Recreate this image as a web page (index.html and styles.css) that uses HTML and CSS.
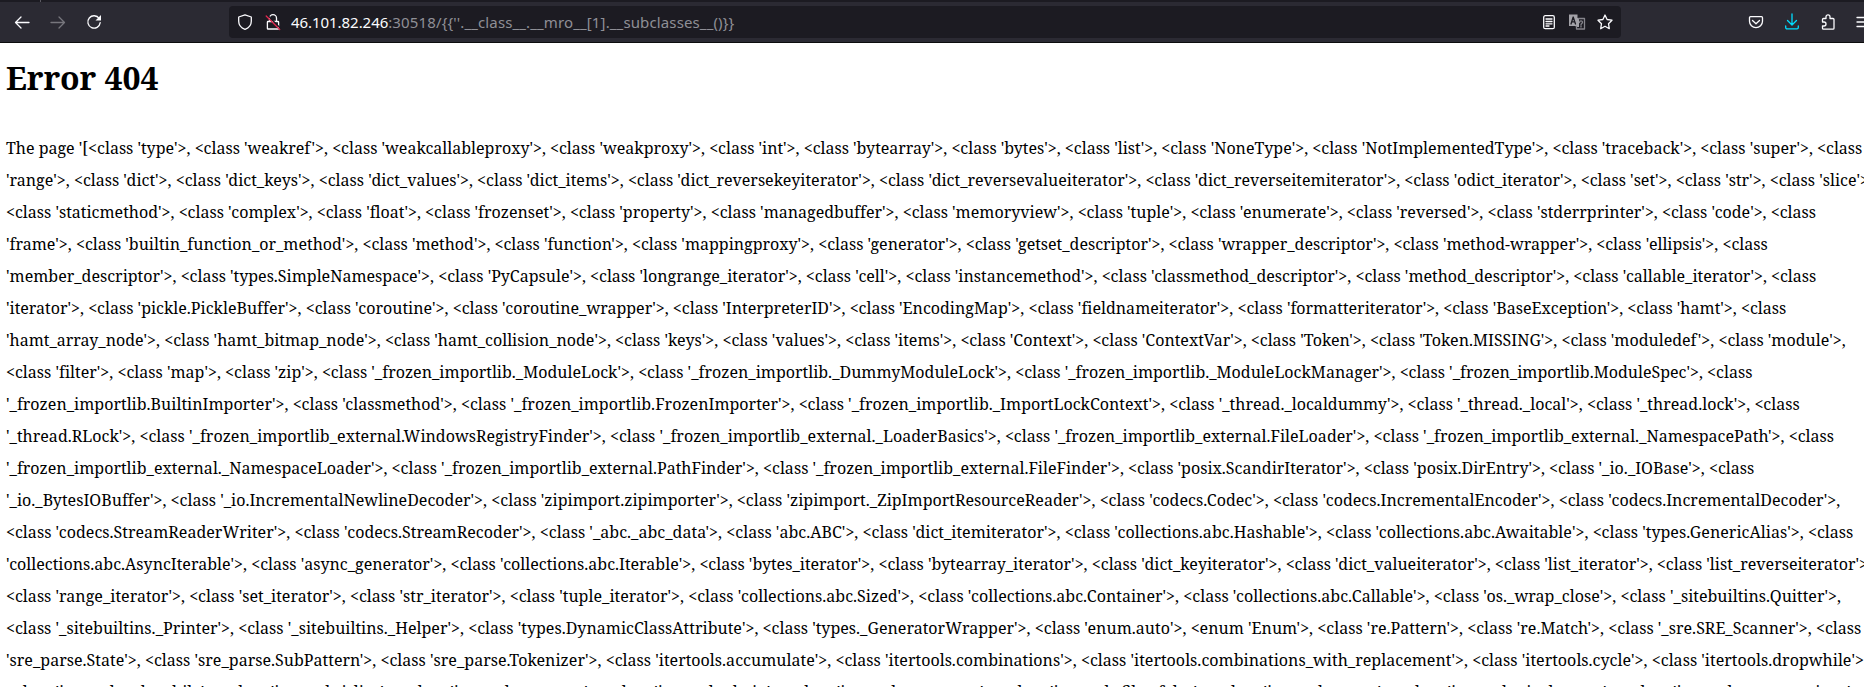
FILE: index.html
```html
<!DOCTYPE html>
<html lang="en">
<head>
<meta charset="utf-8">
<title>Error 404</title>
<link rel="stylesheet" href="styles.css">
</head>
<body>
<div class="tabstrip"><span class="tab-edge"></span></div>
<header class="toolbar">
  <nav class="nav">
    <svg class="icon" viewBox="0 0 16 16"><path d="M15 8.5H1.5M7 3 1.5 8.5 7 14"/></svg>
    <svg class="icon disabled" viewBox="0 0 16 16"><path d="M1 8.5h13.500M9 3l5.500 5.500L9 14"/></svg>
    <svg class="icon" viewBox="0 0 16 16"><path d="M13.200 4.500A6.200 6.200 0 1 0 14.200 8.700"/><path class="solid" d="M15 1v5.500H9.500z"/></svg>
  </nav>
  <div class="urlbar">
    <svg class="icon" viewBox="0 0 16 16"><path d="M8 .8 14.300 3v4.200c0 3.700-2.500 6.600-6.300 8.100-3.800-1.500-6.300-4.400-6.300-8.100V3z"/></svg>
    <svg class="icon lock" viewBox="0 0 16 16"><path d="M4.500 7.500V4.200a3.500 3.500 0 0 1 7 0v3.300M3 7.500h10a.6.6 0 0 1 .6.6v6.300a.6.6 0 0 1-.6.6H3a.6.6 0 0 1-.6-.6V8.100a.6.6 0 0 1 .6-.6z"/><path class="gap" d="M2.500 1.200 15.800 14.500"/><path class="slash" d="M1.200 2 14.700 15.500"/></svg>
    <span class="url"><b>46.101.82.246</b>:30518/{{''.__class__.__mro__[1].__subclasses__()}}</span>
    <svg class="icon" viewBox="0 0 16 16"><rect x="2.700" y="1.700" width="10.600" height="13" rx="1.500"/><path d="M5 5h6M5 7.500h6M5 9.800h6M5 12h3"/></svg>
    <svg class="icon translate" viewBox="0 0 16 16"><path class="solid" d="M0 .5h8.500v3.500H10v9H8l-2-1H0z"/><path class="letter" d="M2 10 4.200 3 6.500 10M2.800 7.800h3"/><path d="M9.500 4.500h6v10.500H7.500V12.500"/><path d="M10.500 8.500c0-2 3-2 3-.2 0 1.200-1.500 1.200-1.500 2.400M12 12v1"/></svg>
    <svg class="icon" viewBox="0 0 16 16"><path d="m8 1 2.100 4.500 4.900.7-3.500 3.500.8 5L8 12.300l-4.300 2.400.8-5L1 6.200l4.900-.7z"/></svg>
  </div>
  <div class="actions">
    <svg class="icon" viewBox="0 0 16 16"><path d="M2.500 2.700h11a1 1 0 0 1 1 1v3.500a6.500 6.500 0 0 1-13 0V3.700a1 1 0 0 1 1-1zM4.500 6.500 8 9.800l3.500-3.300"/></svg>
    <svg class="icon download" viewBox="0 0 16 16"><path d="M8 0v10.500M3.500 6.500 8 11l4.500-4.500M1.700 12v1.500a1.300 1.300 0 0 0 1.300 1.300h10a1.300 1.300 0 0 0 1.300-1.300V12"/></svg>
    <svg class="icon" viewBox="0 0 16 16"><path d="M2.500 8V5.500a1 1 0 0 1 1-1H6V2.800a2 2 0 0 1 4 0v1.700h3a1 1 0 0 1 1 1v8.700a1 1 0 0 1-1 1H3.500a1 1 0 0 1-1-1V12H4a2 2 0 0 0 0-4z"/></svg>
    <svg class="icon" viewBox="0 0 16 16"><path d="M1 3.500h14M1 8h14M1 12.500h14"/></svg>
  </div>
</header>
<main class="page">
<h1 class="title">Error 404</h1>
<div class="listing">
<p class="line" data-end="1862.3">The page '[&lt;class 'type'&gt;, &lt;class 'weakref'&gt;, &lt;class 'weakcallableproxy'&gt;, &lt;class 'weakproxy'&gt;, &lt;class 'int'&gt;, &lt;class 'bytearray'&gt;, &lt;class 'bytes'&gt;, &lt;class 'list'&gt;, &lt;class 'NoneType'&gt;, &lt;class 'NotImplementedType'&gt;, &lt;class 'traceback'&gt;, &lt;class 'super'&gt;, &lt;class</p>
<p class="line" data-end="1873">'range'&gt;, &lt;class 'dict'&gt;, &lt;class 'dict_keys'&gt;, &lt;class 'dict_values'&gt;, &lt;class 'dict_items'&gt;, &lt;class 'dict_reversekeyiterator'&gt;, &lt;class 'dict_reversevalueiterator'&gt;, &lt;class 'dict_reverseitemiterator'&gt;, &lt;class 'odict_iterator'&gt;, &lt;class 'set'&gt;, &lt;class 'str'&gt;, &lt;class 'slice'&gt;,</p>
<p class="line" data-end="1815.3">&lt;class 'staticmethod'&gt;, &lt;class 'complex'&gt;, &lt;class 'float'&gt;, &lt;class 'frozenset'&gt;, &lt;class 'property'&gt;, &lt;class 'managedbuffer'&gt;, &lt;class 'memoryview'&gt;, &lt;class 'tuple'&gt;, &lt;class 'enumerate'&gt;, &lt;class 'reversed'&gt;, &lt;class 'stderrprinter'&gt;, &lt;class 'code'&gt;, &lt;class</p>
<p class="line" data-end="1767.7">'frame'&gt;, &lt;class 'builtin_function_or_method'&gt;, &lt;class 'method'&gt;, &lt;class 'function'&gt;, &lt;class 'mappingproxy'&gt;, &lt;class 'generator'&gt;, &lt;class 'getset_descriptor'&gt;, &lt;class 'wrapper_descriptor'&gt;, &lt;class 'method-wrapper'&gt;, &lt;class 'ellipsis'&gt;, &lt;class</p>
<p class="line" data-end="1816.3">'member_descriptor'&gt;, &lt;class 'types.SimpleNamespace'&gt;, &lt;class 'PyCapsule'&gt;, &lt;class 'longrange_iterator'&gt;, &lt;class 'cell'&gt;, &lt;class 'instancemethod'&gt;, &lt;class 'classmethod_descriptor'&gt;, &lt;class 'method_descriptor'&gt;, &lt;class 'callable_iterator'&gt;, &lt;class</p>
<p class="line" data-end="1785.3">'iterator'&gt;, &lt;class 'pickle.PickleBuffer'&gt;, &lt;class 'coroutine'&gt;, &lt;class 'coroutine_wrapper'&gt;, &lt;class 'InterpreterID'&gt;, &lt;class 'EncodingMap'&gt;, &lt;class 'fieldnameiterator'&gt;, &lt;class 'formatteriterator'&gt;, &lt;class 'BaseException'&gt;, &lt;class 'hamt'&gt;, &lt;class</p>
<p class="line" data-end="1845.7">'hamt_array_node'&gt;, &lt;class 'hamt_bitmap_node'&gt;, &lt;class 'hamt_collision_node'&gt;, &lt;class 'keys'&gt;, &lt;class 'values'&gt;, &lt;class 'items'&gt;, &lt;class 'Context'&gt;, &lt;class 'ContextVar'&gt;, &lt;class 'Token'&gt;, &lt;class 'Token.MISSING'&gt;, &lt;class 'moduledef'&gt;, &lt;class 'module'&gt;,</p>
<p class="line" data-end="1752">&lt;class 'filter'&gt;, &lt;class 'map'&gt;, &lt;class 'zip'&gt;, &lt;class '_frozen_importlib._ModuleLock'&gt;, &lt;class '_frozen_importlib._DummyModuleLock'&gt;, &lt;class '_frozen_importlib._ModuleLockManager'&gt;, &lt;class '_frozen_importlib.ModuleSpec'&gt;, &lt;class</p>
<p class="line" data-end="1799.7">'_frozen_importlib.BuiltinImporter'&gt;, &lt;class 'classmethod'&gt;, &lt;class '_frozen_importlib.FrozenImporter'&gt;, &lt;class '_frozen_importlib._ImportLockContext'&gt;, &lt;class '_thread._localdummy'&gt;, &lt;class '_thread._local'&gt;, &lt;class '_thread.lock'&gt;, &lt;class</p>
<p class="line" data-end="1834">'_thread.RLock'&gt;, &lt;class '_frozen_importlib_external.WindowsRegistryFinder'&gt;, &lt;class '_frozen_importlib_external._LoaderBasics'&gt;, &lt;class '_frozen_importlib_external.FileLoader'&gt;, &lt;class '_frozen_importlib_external._NamespacePath'&gt;, &lt;class</p>
<p class="line" data-end="1754.3">'_frozen_importlib_external._NamespaceLoader'&gt;, &lt;class '_frozen_importlib_external.PathFinder'&gt;, &lt;class '_frozen_importlib_external.FileFinder'&gt;, &lt;class 'posix.ScandirIterator'&gt;, &lt;class 'posix.DirEntry'&gt;, &lt;class '_io._IOBase'&gt;, &lt;class</p>
<p class="line" data-end="1839.7">'_io._BytesIOBuffer'&gt;, &lt;class '_io.IncrementalNewlineDecoder'&gt;, &lt;class 'zipimport.zipimporter'&gt;, &lt;class 'zipimport._ZipImportResourceReader'&gt;, &lt;class 'codecs.Codec'&gt;, &lt;class 'codecs.IncrementalEncoder'&gt;, &lt;class 'codecs.IncrementalDecoder'&gt;,</p>
<p class="line" data-end="1853.3">&lt;class 'codecs.StreamReaderWriter'&gt;, &lt;class 'codecs.StreamRecoder'&gt;, &lt;class '_abc._abc_data'&gt;, &lt;class 'abc.ABC'&gt;, &lt;class 'dict_itemiterator'&gt;, &lt;class 'collections.abc.Hashable'&gt;, &lt;class 'collections.abc.Awaitable'&gt;, &lt;class 'types.GenericAlias'&gt;, &lt;class</p>
<p class="line" data-end="1872">'collections.abc.AsyncIterable'&gt;, &lt;class 'async_generator'&gt;, &lt;class 'collections.abc.Iterable'&gt;, &lt;class 'bytes_iterator'&gt;, &lt;class 'bytearray_iterator'&gt;, &lt;class 'dict_keyiterator'&gt;, &lt;class 'dict_valueiterator'&gt;, &lt;class 'list_iterator'&gt;, &lt;class 'list_reverseiterator'&gt;,</p>
<p class="line" data-end="1841">&lt;class 'range_iterator'&gt;, &lt;class 'set_iterator'&gt;, &lt;class 'str_iterator'&gt;, &lt;class 'tuple_iterator'&gt;, &lt;class 'collections.abc.Sized'&gt;, &lt;class 'collections.abc.Container'&gt;, &lt;class 'collections.abc.Callable'&gt;, &lt;class 'os._wrap_close'&gt;, &lt;class '_sitebuiltins.Quitter'&gt;,</p>
<p class="line" data-end="1861.3">&lt;class '_sitebuiltins._Printer'&gt;, &lt;class '_sitebuiltins._Helper'&gt;, &lt;class 'types.DynamicClassAttribute'&gt;, &lt;class 'types._GeneratorWrapper'&gt;, &lt;class 'enum.auto'&gt;, &lt;enum 'Enum'&gt;, &lt;class 're.Pattern'&gt;, &lt;class 're.Match'&gt;, &lt;class '_sre.SRE_Scanner'&gt;, &lt;class</p>
<p class="line" data-end="1868">'sre_parse.State'&gt;, &lt;class 'sre_parse.SubPattern'&gt;, &lt;class 'sre_parse.Tokenizer'&gt;, &lt;class 'itertools.accumulate'&gt;, &lt;class 'itertools.combinations'&gt;, &lt;class 'itertools.combinations_with_replacement'&gt;, &lt;class 'itertools.cycle'&gt;, &lt;class 'itertools.dropwhile'&gt;,</p>
<p class="line">&lt;class 'itertools.takewhile'&gt;, &lt;class 'itertools.islice'&gt;, &lt;class 'itertools.starmap'&gt;, &lt;class 'itertools.chain'&gt;, &lt;class 'itertools.compress'&gt;, &lt;class 'itertools.filterfalse'&gt;, &lt;class 'itertools.count'&gt;, &lt;class 'itertools.zip_longest'&gt;, &lt;class 'itertools.permutations'&gt;,</p>
</div>
</main>
<script src="fit.js"></script>
</body>
</html>
```
FILE: fit.js
```js
// Track each line so that its last glyph ends at its data-end position.
document.querySelectorAll('.line[data-end]').forEach(function (line) {
  var range = document.createRange();
  range.selectNodeContents(line);
  var gap = Number(line.dataset.end) - range.getBoundingClientRect().right;
  line.style.letterSpacing = gap / line.textContent.length + 'px';
});
```
FILE: styles.css
```css
* { box-sizing: border-box; }
html, body { margin: 0; height: 687px; overflow: hidden; background: #fff; }
body { display: flex; flex-direction: column; }
.tabstrip { flex: none; height: 2px; background: #1c1b22; padding-left: 40px; }
.tab-edge { display: block; width: 1px; height: 2px; background: #5b5a62; }
.toolbar { flex: none; display: flex; align-items: center; height: 41px; background: #2b2a33; border-bottom: 1px solid #0c0c0d; overflow: hidden; }
.icon { flex: none; display: block; width: 16px; height: 16px; fill: none; stroke: #fbfbfe; stroke-width: 1.3; stroke-linecap: round; stroke-linejoin: round; overflow: visible; }
.icon .solid { fill: #fbfbfe; stroke: none; }
.disabled { stroke: #77767d; }
.nav { flex: none; display: flex; gap: 20px; width: 229px; padding-left: 14px; }
.urlbar { flex: none; display: flex; align-items: center; width: 1392px; height: 32px; padding: 0 8px; background: #1c1b22; border-radius: 4px; }
.lock { margin-left: 12px; }
.lock .gap { stroke: #1c1b22; }
.lock .slash { stroke: #e22850; }
.url { flex: 1; margin-left: 10px; font: 15px/32px "Noto Sans", sans-serif; letter-spacing: 0.13px; color: #8f8f96; white-space: nowrap; }
.url b { font-weight: 400; letter-spacing: -0.05px; color: #fbfbfe; }
.translate { margin: 0 12px; stroke: #85848b; }
.icon.translate .solid { fill: #a3a2a8; }
.translate .letter { stroke: #1c1b22; }
.actions { flex: none; display: flex; gap: 20px; padding-left: 127px; }
.download { stroke: #00ddff; }
.page { flex: 1; min-height: 0; overflow: hidden; padding-left: 6px; font-family: "Noto Serif", serif; color: #000; }
.title { margin: 13px 0 32px; font-size: 32px; line-height: 44px; font-weight: 700; letter-spacing: -0.1px; }
.line { margin: 0; font-size: 16px; line-height: 32px; white-space: nowrap; }
```
